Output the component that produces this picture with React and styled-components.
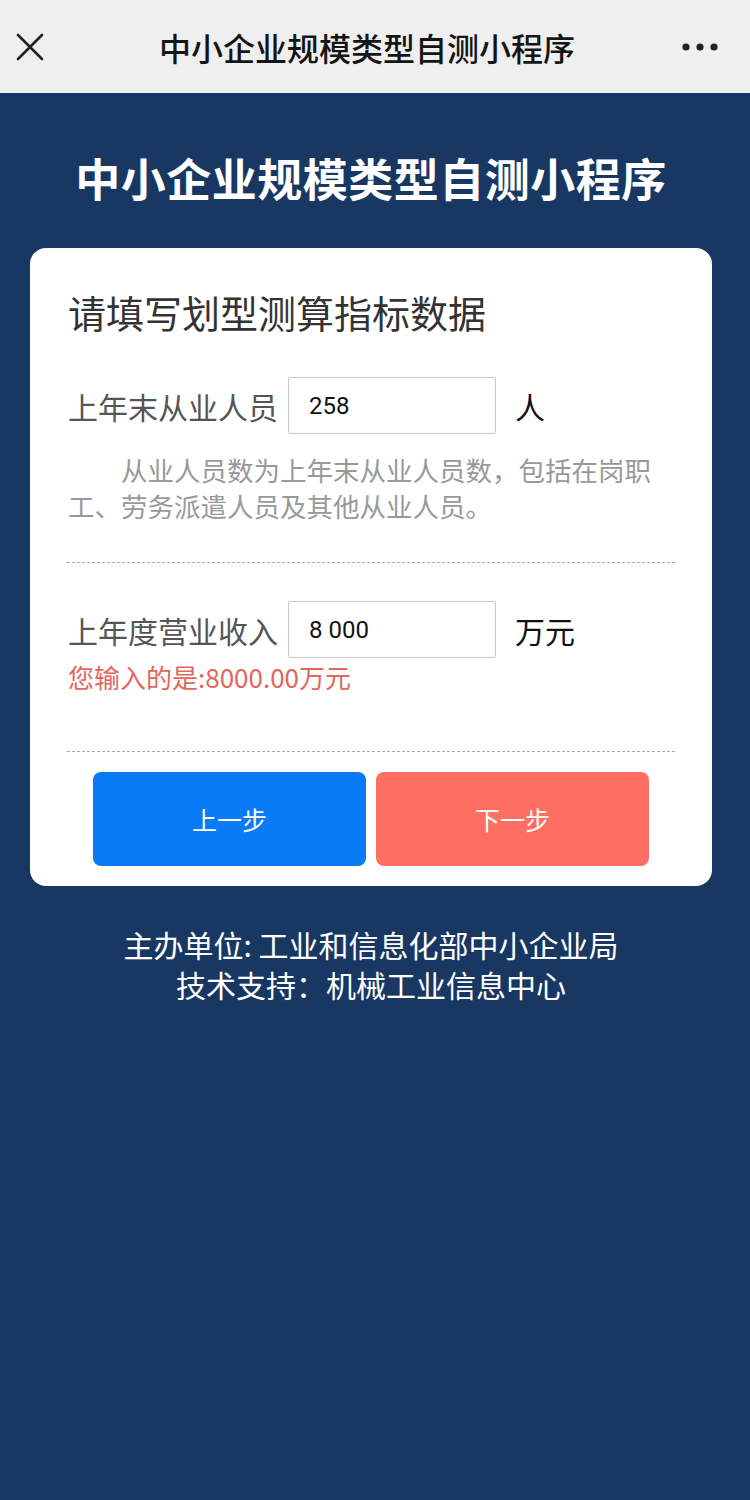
import React from 'react';
import styled, { createGlobalStyle } from 'styled-components';

const GlobalStyle = createGlobalStyle`
    html, body {
        margin: 0;
        padding: 0;
        background: #183863;
    }
    body {
        font-family: "Noto Sans CJK SC", "Noto Sans", sans-serif;
    }
    * {
        box-sizing: border-box;
    }
`;

const Page = styled.div`
    min-height: 1500px;
    background: #183863;
`;

const NavBar = styled.div`
    height: 93px;
    background: #efefef;
    display: flex;
    align-items: center;
    justify-content: space-between;
    padding: 0 30px 0 14px;
`;

const NavIcon = styled.div`
    width: 32px;
    height: 32px;
    display: flex;
    align-items: center;
    justify-content: center;
`;

const NavTitle = styled.div`
    font-size: 32px;
    font-weight: 500;
    color: #151515;
    padding-left: 8px;
`;

const Main = styled.div`
    padding: 0 38px 0 30px;
`;

const AppTitle = styled.h1`
    margin: 0;
    padding-top: 14px;
    height: 155px;
    display: flex;
    align-items: center;
    justify-content: center;
    font-size: 45px;
    font-weight: 700;
    color: #fff;
    letter-spacing: 0.5px;
`;

const Card = styled.div`
    background: #fff;
    border-radius: 16px;
    padding: 37px 38px 20px;
`;

const CardTitle = styled.h2`
    margin: 0;
    font-size: 38px;
    line-height: 54px;
    font-weight: 400;
    color: #333;
`;

const Row = styled.div`
    display: flex;
    align-items: center;
    margin-top: ${p => p.$top}px;
`;

const Label = styled.span`
    font-size: 30px;
    color: #555;
    width: 220px;
    white-space: nowrap;
`;

const Input = styled.input`
    width: 208px;
    height: 57px;
    border: 1px solid #c8c8c8;
    border-radius: 2px;
    padding: 0 20px;
    font-family: "Roboto", "Liberation Sans", sans-serif;
    font-size: 24px;
    color: #111;
    outline: none;
`;

const Unit = styled.span`
    margin-left: 19px;
    font-size: 30px;
    color: #111;
`;

const Hint = styled.p`
    margin: 18px 0 0;
    font-size: 26.5px;
    line-height: 36px;
    color: #999;
    text-indent: 2em;
`;

const Notice = styled.p`
    margin: 1px 0 0;
    font-size: 26px;
    line-height: 36px;
    color: #e2665e;
`;

const Divider = styled.div`
    border-top: 1px dashed #a8a8a8;
    margin: ${p => p.$top}px -1px 0;
`;

const Buttons = styled.div`
    display: grid;
    grid-template-columns: 1fr 1fr;
    gap: 10px;
    padding: 0 25px;
    margin-top: 20px;
`;

const StepButton = styled.button`
    height: 94px;
    border: none;
    border-radius: 8px;
    background: ${p => (p.$primary ? '#0a7bf7' : '#fd6f62')};
    color: #fff;
    font-family: inherit;
    font-size: 25px;
    cursor: pointer;
`;

const Footer = styled.div`
    margin-top: 38px;
    text-align: center;
    color: #fff;
    font-size: 30px;
    line-height: 40px;
`;

const CloseIcon = () => (
    <svg width="30" height="30" viewBox="0 0 30 30">
        <path d="M3 3 L27 27 M27 3 L3 27" stroke="#222" strokeWidth="2.6" strokeLinecap="round" />
    </svg>
);

const MoreIcon = () => (
    <svg width="40" height="10" viewBox="0 0 40 10">
        <circle cx="6" cy="5" r="3.6" fill="#222" />
        <circle cx="20" cy="5" r="3.6" fill="#222" />
        <circle cx="34" cy="5" r="3.6" fill="#222" />
    </svg>
);

export default function App() {
    return (
        <Page>
            <GlobalStyle />
            <NavBar>
                <NavIcon><CloseIcon /></NavIcon>
                <NavTitle>中小企业规模类型自测小程序</NavTitle>
                <MoreIcon />
            </NavBar>

            <Main>
                <AppTitle>中小企业规模类型自测小程序</AppTitle>

                <Card>
                    <CardTitle>请填写划型测算指标数据</CardTitle>

                    <Row $top={38}>
                        <Label>上年末从业人员</Label>
                        <Input defaultValue="258" />
                        <Unit>人</Unit>
                    </Row>
                    <Hint>从业人员数为上年末从业人员数，包括在岗职工、劳务派遣人员及其他从业人员。</Hint>

                    <Divider $top={38} />

                    <Row $top={38}>
                        <Label>上年度营业收入</Label>
                        <Input defaultValue="8 000" />
                        <Unit>万元</Unit>
                    </Row>
                    <Notice>您输入的是:8000.00万元</Notice>

                    <Divider $top={56} />

                    <Buttons>
                        <StepButton $primary>上一步</StepButton>
                        <StepButton>下一步</StepButton>
                    </Buttons>
                </Card>

                <Footer>
                    <div>主办单位: 工业和信息化部中小企业局</div>
                    <div>技术支持：机械工业信息中心</div>
                </Footer>
            </Main>
        </Page>
    );
}
